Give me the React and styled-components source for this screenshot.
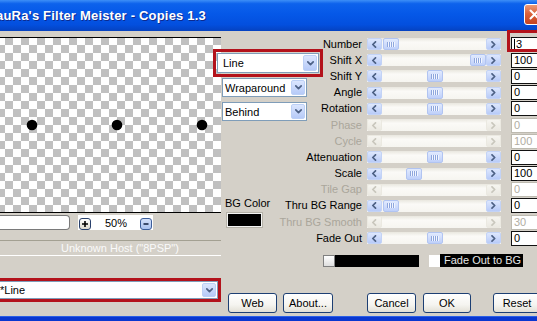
import React from 'react';
import styled, { createGlobalStyle } from 'styled-components';

const Global = createGlobalStyle`
  html, body { margin: 0; padding: 0; background: #d4d0c8; overflow: hidden; }
  body { font-family: "Liberation Sans", Arial, sans-serif; }
  #root { width: 537px; height: 321px; overflow: hidden; }
`;

const Window = styled.div`
  width: 537px;
  height: 321px;
  display: flex;
  flex-direction: column;
  background: #d4d0c8;
  overflow: hidden;
`;

const TitleBar = styled.div`
  flex: none;
  height: 31px;
  display: flex;
  align-items: center;
  background: linear-gradient(to bottom, #3d8ff7 0%, #0d62ec 12%, #0558e8 45%, #034fde 80%, #0542c0 100%);
`;

const TitleText = styled.div`
  margin-left: -4px;
  color: #fff;
  font-weight: bold;
  font-size: 13px;
  letter-spacing: 0.2px;
  white-space: nowrap;
  text-shadow: 1px 1px 0 #0c2a8e;
`;

const CloseBtn = styled.div`
  margin-left: auto;
  margin-right: -8px;
  margin-top: -2px;
  width: 21px;
  height: 21px;
  box-sizing: border-box;
  border: 1px solid #fff;
  border-radius: 3px;
  background: linear-gradient(to bottom, #ec9a78 0%, #d9623c 45%, #c6431f 100%);
  display: flex;
  align-items: center;
  justify-content: center;
`;

const Content = styled.div`
  flex: 1;
  display: flex;
  min-height: 0;
`;

const BottomFrame = styled.div`
  flex: none;
  height: 5px;
  background: #0a37d0;
  border-top: 1px solid #2a5fe6;
  box-sizing: border-box;
`;

const LeftCol = styled.div`
  flex: none;
  width: 221px;
  display: flex;
  flex-direction: column;
`;

const Preview = styled.div`
  margin-top: 6px;
  height: 176px;
  box-sizing: border-box;
  border-top: 1px solid #000;
  border-bottom: 1px solid #000;
  background-color: #fff;
  background-image:
    linear-gradient(45deg, #c0c0c0 25%, transparent 25%, transparent 75%, #c0c0c0 75%),
    linear-gradient(45deg, #c0c0c0 25%, transparent 25%, transparent 75%, #c0c0c0 75%);
  background-size: 16px 16px;
  background-position: -3px -1px, 5px 7px;
  display: flex;
`;

const ZoomRow = styled.div`
  margin-top: 2px;
  height: 15px;
  display: flex;
  align-items: flex-end;
`;

const ZoomField = styled.div`
  width: 70px;
  height: 15px;
  box-sizing: border-box;
  background: #fff;
  border: 1px solid #7a7a7a;
  border-left: none;
  border-radius: 0 4px 4px 0;
`;

const ZoomPad = styled.div`
  margin-left: 8px;
  width: 75px;
  height: 15px;
  background: #fff;
  display: flex;
  align-items: flex-end;
  font-size: 11px;
`;

const SmallBtn = styled.div`
  width: 12px;
  height: 12px;
  box-sizing: border-box;
  margin-left: ${p => p.$ml || 0}px;
  margin-right: ${p => p.$mr || 0}px;
  border: 1px solid ${p => (p.$active ? '#3b5d9a' : '#28406c')};
  border-radius: 3px;
  background: ${p => (p.$active ? 'linear-gradient(#d4e1fb, #a9c1ef)' : 'linear-gradient(#ffffff, #dcd8cc)')};
  display: flex;
  align-items: center;
  justify-content: center;
`;

const Percent = styled.span`
  margin-left: 14px;
  line-height: 14px;
  color: #000;
`;

const HostGroup = styled.div`
  margin-top: 10px;
  height: 14px;
  border-top: 1px solid #a3a092;
  border-bottom: 1px solid #fff;
  padding-left: 19px;
  text-align: center;
  font-size: 11px;
  line-height: 14px;
  color: #fafafa;
  white-space: nowrap;
`;

const Combo = styled.div`
  flex: none;
  box-sizing: border-box;
  width: ${p => p.$w}px;
  height: ${p => p.$h}px;
  margin-left: ${p => p.$ml || 0}px;
  margin-top: ${p => p.$mt || 0}px;
  background: #fff;
  border: 1px solid #7f9db9;
  display: flex;
  align-items: center;
  font-size: 11px;
  color: #000;
  outline: ${p => (p.$marked ? '3px solid #b3121b' : 'none')};
  outline-offset: ${p => (p.$marked ? p.$off || 0 : 0)}px;
`;

const ComboText = styled.span`
  flex: 1;
  padding-left: ${p => p.$pl ?? 5}px;
  white-space: nowrap;
`;

const ComboArrow = styled.div`
  width: 14px;
  align-self: stretch;
  margin: 1px;
  box-sizing: border-box;
  border: 1px solid #bcd0f6;
  border-radius: 2px;
  background: linear-gradient(to bottom, #dbe6fe, #b6caf8);
  display: flex;
  align-items: center;
  justify-content: center;
`;

const RightCol = styled.div`
  flex: 1;
  display: flex;
  flex-direction: column;
  min-width: 0;
`;

const Grid = styled.div`
  margin-top: 5px;
  display: grid;
  grid-template-columns: 101px 40px 149px 40px;
  grid-template-rows: repeat(13, 16.2px);
`;

const MidCol = styled.div`
  grid-column: 1;
  grid-row: 1 / 14;
  display: flex;
  flex-direction: column;
  align-items: flex-start;
  padding-top: 17px;
`;

const BGLabel = styled.div`
  margin-top: 76px;
  padding-left: 4px;
  font-size: 11px;
  line-height: 13px;
  white-space: nowrap;
`;

const Swatch = styled.div`
  margin-top: 3px;
  margin-left: 6px;
  width: 35px;
  height: 14px;
  box-sizing: border-box;
  background: #000;
  border: 1px solid #f4f4f4;
  box-shadow: 0 0 0 1px #b5b2a8;
`;

const Label = styled.div`
  grid-column: 1 / 3;
  grid-row: ${p => p.$row};
  justify-self: end;
  align-self: center;
  font-size: 11px;
  line-height: 13px;
  white-space: nowrap;
  color: ${p => (p.$disabled ? '#aaa69b' : '#000')};
`;

const SliderCell = styled.div`
  grid-column: 3;
  grid-row: ${p => p.$row};
  align-self: center;
  padding-left: 5px;
`;

const Track = styled.div`
  position: relative;
  width: 134px;
  height: 12px;
  display: flex;
  justify-content: space-between;
  background: linear-gradient(to bottom, #e9e7df 0%, #fbfaf7 35%, #f6f5f0 100%);
`;

const ArrowBtn = styled.div`
  width: 15px;
  height: 12px;
  box-sizing: border-box;
  border: 1px solid ${p => (p.$disabled ? '#ebe9e1' : '#c3d3f6')};
  border-radius: 2px;
  background: ${p => (p.$disabled ? 'linear-gradient(#f6f5f0, #ebe9e2)' : 'linear-gradient(#dde7fd, #b8cbf8)')};
  display: flex;
  align-items: center;
  justify-content: center;
`;

const Thumb = styled.div`
  position: absolute;
  top: 0;
  width: 16px;
  height: 12px;
  box-sizing: border-box;
  border: 1px solid #b1c4f1;
  border-radius: 2px;
  background: linear-gradient(to bottom, #e1eafe, #bfd0fa);
  display: flex;
  align-items: center;
  justify-content: center;
`;

const Grip = styled.div`
  width: 8px;
  height: 5px;
  background: repeating-linear-gradient(to right, #8ea6dd 0 1px, #f2f6ff 1px 2px);
`;

const ValueBox = styled.div`
  grid-column: 4;
  grid-row: ${p => p.$row};
  align-self: center;
  position: relative;
  height: 15px;
  box-sizing: border-box;
  border: 1px solid ${p => (p.$disabled ? '#bdbab0' : '#111')};
  background: #fff;
  font-size: 11px;
  line-height: 13px;
  padding-left: 2px;
  color: ${p => (p.$disabled ? '#b1ada3' : '#000')};
  display: flex;
  align-items: center;
  &::after {
    content: '';
    display: ${p => (p.$marked ? 'block' : 'none')};
    position: absolute;
    top: -8px;
    left: -5px;
    right: -10px;
    bottom: -1px;
    border: 3px solid #b3121b;
  }
`;

const Caret = styled.span`
  width: 1px;
  height: 11px;
  background: #000;
  margin-right: 1px;
`;

const FadeRow = styled.div`
  margin-top: 8px;
  padding-left: 102px;
  height: 13px;
  display: flex;
  align-items: center;
`;

const ColorTip = styled.div`
  width: 12px;
  height: 12px;
  box-sizing: border-box;
  border: 1px solid #808080;
  background: linear-gradient(to bottom, #ffffff, #dedede);
`;

const BlackBar = styled.div`
  width: 84px;
  height: 12px;
  background: #000;
`;

const CheckBox = styled.div`
  margin-left: 10px;
  width: 11px;
  height: 12px;
  background: #fff;
`;

const FadeLabel = styled.div`
  width: 83px;
  height: 13px;
  box-sizing: border-box;
  padding-left: 4px;
  background: #000;
  color: #e6e6e6;
  font-size: 11px;
  line-height: 13px;
  white-space: nowrap;
`;

const ButtonRow = styled.div`
  margin-top: 26px;
  padding-left: 7px;
  display: flex;
`;

const Button = styled.div`
  flex: none;
  width: ${p => p.$w}px;
  margin-left: ${p => p.$ml || 0}px;
  height: 20px;
  box-sizing: border-box;
  border: 1px solid #1d3f73;
  border-radius: 3px;
  background: linear-gradient(to bottom, #ffffff 0%, #f5f4f0 60%, #e3e0d6 100%);
  font-size: 11px;
  line-height: 18px;
  text-align: center;
  color: #000;
  white-space: nowrap;
`;

const Chevron = ({ dir, color }) => {
  const d = dir === 'left' ? 'M4.5 0.8 L1.8 3.5 L4.5 6.2' : dir === 'right' ? 'M2 0.8 L4.7 3.5 L2 6.2' : 'M0.8 1.8 L3.5 4.6 L6.2 1.8';
  return (
    <svg width="7" height="7" viewBox="0 0 7 7">
      <path d={d} fill="none" stroke={color} strokeWidth="1.7" strokeLinecap="round" strokeLinejoin="round" />
    </svg>
  );
};

const DownArrow = () => <Chevron dir="down" color="#4d6185" />;

const rows = [
  { label: 'Number', value: '3', pos: 0, marked: true, caret: true },
  { label: 'Shift X', value: '100', pos: 1 },
  { label: 'Shift Y', value: '0', pos: 0.5 },
  { label: 'Angle', value: '0', pos: 0.5 },
  { label: 'Rotation', value: '0', pos: 0.5 },
  { label: 'Phase', value: '0', disabled: true },
  { label: 'Cycle', value: '100', disabled: true },
  { label: 'Attenuation', value: '0', pos: 0.5 },
  { label: 'Scale', value: '100', pos: 0.26 },
  { label: 'Tile Gap', value: '0', disabled: true },
  { label: 'Thru BG Range', value: '0', pos: 0 },
  { label: 'Thru BG Smooth', value: '30', disabled: true },
  { label: 'Fade Out', value: '0', pos: 0.51 },
];

const Slider = ({ row, pos, disabled }) => {
  const color = disabled ? '#c9c7bd' : '#4d6185';
  return (
    <SliderCell $row={row}>
      <Track>
        <ArrowBtn $disabled={disabled}><Chevron dir="left" color={color} /></ArrowBtn>
        {!disabled && (
          <Thumb style={{ left: `${16 + pos * 87}px` }}>
            <Grip />
          </Thumb>
        )}
        <ArrowBtn $disabled={disabled}><Chevron dir="right" color={color} /></ArrowBtn>
      </Track>
    </SliderCell>
  );
};

export default function App() {
  return (
    <>
      <Global />
      <Window>
        <TitleBar>
          <TitleText>auRa's Filter Meister - Copies 1.3</TitleText>
          <CloseBtn>
            <svg width="11" height="11" viewBox="0 0 11 11">
              <path d="M1.5 1.5 L9.5 9.5 M9.5 1.5 L1.5 9.5" stroke="#fff" strokeWidth="2" strokeLinecap="round" />
            </svg>
          </CloseBtn>
        </TitleBar>
        <Content>
          <LeftCol>
            <Preview>
              <svg width="221" height="174" viewBox="0 0 221 174">
                <circle cx="32" cy="87" r="5.3" fill="#000" />
                <circle cx="117" cy="87" r="5.3" fill="#000" />
                <circle cx="202" cy="87" r="5.3" fill="#000" />
              </svg>
            </Preview>
            <ZoomRow>
              <ZoomField />
              <ZoomPad>
                <SmallBtn $ml={1}>
                  <svg width="8" height="8" viewBox="0 0 8 8">
                    <path d="M4 1 V7 M1 4 H7" stroke="#000" strokeWidth="1.6" />
                  </svg>
                </SmallBtn>
                <Percent>50%</Percent>
                <SmallBtn $active $ml={13}>
                  <svg width="8" height="8" viewBox="0 0 8 8">
                    <path d="M1.5 4 H6.5" stroke="#1b2a4a" strokeWidth="1.6" />
                  </svg>
                </SmallBtn>
              </ZoomPad>
            </ZoomRow>
            <HostGroup>Unknown Host ("8PSP")</HostGroup>
            <Combo $w={221} $h={18} $ml={-3} $mt={25} $marked>
              <ComboText $pl={2}>*Line</ComboText>
              <ComboArrow><DownArrow /></ComboArrow>
            </Combo>
          </LeftCol>
          <RightCol>
            <Grid>
              <MidCol>
                <Combo $w={102} $h={20} $ml={-4} $marked $off={1}>
                  <ComboText>Line</ComboText>
                  <ComboArrow><DownArrow /></ComboArrow>
                </Combo>
                <Combo $w={85} $h={19} $ml={1} $mt={5}>
                  <ComboText $pl={2}>Wraparound</ComboText>
                  <ComboArrow><DownArrow /></ComboArrow>
                </Combo>
                <Combo $w={85} $h={19} $ml={1} $mt={5}>
                  <ComboText $pl={2}>Behind</ComboText>
                  <ComboArrow><DownArrow /></ComboArrow>
                </Combo>
                <BGLabel>BG Color</BGLabel>
                <Swatch />
              </MidCol>
              {rows.map((r, i) => (
                <React.Fragment key={r.label}>
                  <Label $row={i + 1} $disabled={r.disabled}>{r.label}</Label>
                  <Slider row={i + 1} pos={r.pos} disabled={r.disabled} />
                  <ValueBox $row={i + 1} $disabled={r.disabled} $marked={r.marked}>
                    {r.caret && <Caret />}
                    {r.value}
                  </ValueBox>
                </React.Fragment>
              ))}
            </Grid>
            <FadeRow>
              <ColorTip />
              <BlackBar />
              <CheckBox />
              <FadeLabel>Fade Out to BG</FadeLabel>
            </FadeRow>
            <ButtonRow>
              <Button $w={49}>Web</Button>
              <Button $w={50} $ml={6}>About...</Button>
              <Button $w={49} $ml={34}>Cancel</Button>
              <Button $w={48} $ml={7}>OK</Button>
              <Button $w={48} $ml={22}>Reset</Button>
            </ButtonRow>
          </RightCol>
        </Content>
        <BottomFrame />
      </Window>
    </>
  );
}
